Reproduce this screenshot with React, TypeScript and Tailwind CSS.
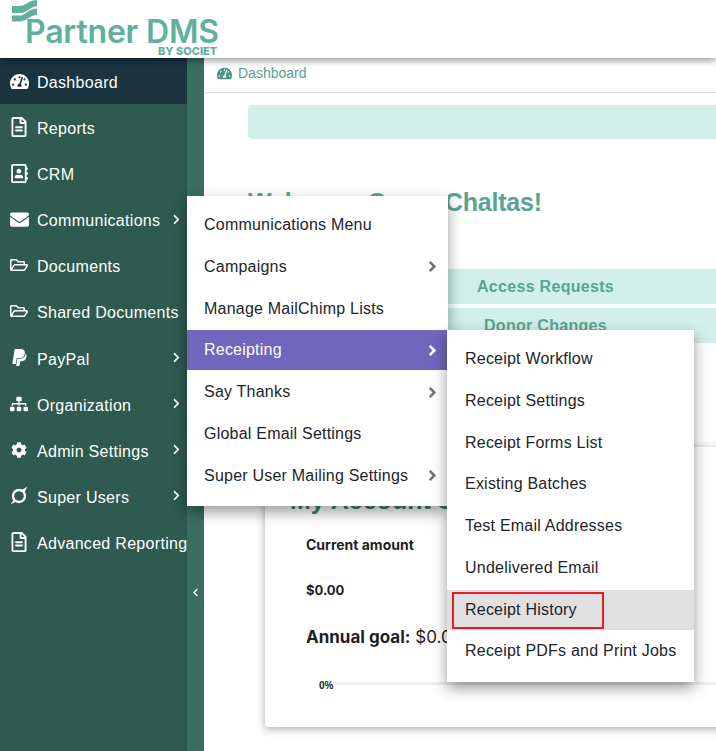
import { FaAngleRight, FaChevronLeft, FaChevronRight, FaCog, FaEnvelope, FaPaypal, FaRegAddressBook, FaRegFileAlt, FaRegFolderOpen, FaSitemap, FaTachometerAlt } from "react-icons/fa";

function SuperIcon({ className }: { className?: string }) {
  return (
    <svg viewBox="0 0 20 20" className={className} fill="currentColor">
      <circle cx="10" cy="10" r="6" fill="none" stroke="currentColor" strokeWidth="2.4" />
      <polygon points="1.5,18.5 8,15 5,13.5" />
      <polygon points="18.5,0.5 12,4.5 15,7" />
    </svg>
  );
}

const navItems = [
  { label: "Dashboard", icon: FaTachometerAlt, size: "h-[19px] w-[19px]", active: true },
  { label: "Reports", icon: FaRegFileAlt, size: "h-[20px] w-[20px]" },
  { label: "CRM", icon: FaRegAddressBook, size: "h-[19px] w-[19px]" },
  { label: "Communications", icon: FaEnvelope, size: "h-[19px] w-[19px]", arrow: true },
  { label: "Documents", icon: FaRegFolderOpen, size: "h-[18px] w-[18px]" },
  { label: "Shared Documents", icon: FaRegFolderOpen, size: "h-[18px] w-[18px]" },
  { label: "PayPal", icon: FaPaypal, size: "h-[19px] w-[19px]", arrow: true },
  { label: "Organization", icon: FaSitemap, size: "h-[18px] w-[18px]", arrow: true },
  { label: "Admin Settings", icon: FaCog, size: "h-[16px] w-[16px]", arrow: true },
  { label: "Super Users", icon: SuperIcon, size: "h-[20px] w-[20px]", arrow: true },
  { label: "Advanced Reporting", icon: FaRegFileAlt, size: "h-[20px] w-[20px]" },
];

const commsMenu = [
  { label: "Communications Menu" },
  { label: "Campaigns", arrow: true },
  { label: "Manage MailChimp Lists" },
  { label: "Receipting", arrow: true, active: true },
  { label: "Say Thanks", arrow: true },
  { label: "Global Email Settings" },
  { label: "Super User Mailing Settings", arrow: true },
];

const receiptMenu = [
  "Receipt Workflow",
  "Receipt Settings",
  "Receipt Forms List",
  "Existing Batches",
  "Test Email Addresses",
  "Undelivered Email",
  "Receipt History",
  "Receipt PDFs and Print Jobs",
];

export default function App() {
  return (
    <div className="relative h-[751px] w-[716px] overflow-hidden bg-white font-['Liberation_Sans',Arial,sans-serif] text-base">
      {/* Header */}
      <header className="relative z-10 h-[58px] bg-white shadow-[0_2px_8px_rgba(0,0,0,0.45)]">
        <div className="relative h-full">
          <svg viewBox="0 0 25 22" className="absolute left-[12px] top-0 h-[22px] w-[25px]" fill="#5fb09c">
            <path d="M0 6 H8 C13 6 15 1 25 0 V6 C18 7 15 13 8 13 H0 Z" />
            <path d="M0 15.5 H8 C14 15.5 15 9 25 8.5 V15 C18 15 15 21 8 21.5 H0 Z" />
          </svg>
          <span className="absolute left-[25px] top-[19px] font-['Inter',sans-serif] text-[32px] leading-[26px] font-semibold tracking-[-0.2px] whitespace-nowrap text-[#5fb09c]">Partner DMS</span>
          <span className="absolute left-[158px] top-[45px] font-['Inter',sans-serif] text-[11px] leading-[12px] font-extrabold whitespace-nowrap text-[#5fb09c]">BY SOCIET</span>
        </div>
      </header>

      <div className="flex h-[693px]">
        {/* Sidebar */}
        <aside className="flex w-[204px] shrink-0">
          <nav className="w-[187px] bg-[#2e5a50] text-white">
            {navItems.map((item) => {
              const Icon = item.icon;
              return (
                <div key={item.label} className={`flex h-[46.08px] items-center whitespace-nowrap ${item.active ? "bg-[#1a3540]" : ""}`}>
                  <span className="flex w-[37px] shrink-0 justify-center pl-[1px]">
                    <Icon className={item.size} />
                  </span>
                  <span className="pt-[4px] tracking-[0.3px]">{item.label}</span>
                  {item.arrow && <FaChevronRight className="mr-[5px] ml-auto h-[11px] w-[11px]" />}
                </div>
              );
            })}
          </nav>
          <div className="flex w-[17px] items-end justify-center bg-[#3a6e60] pb-[154px] text-white">
            <FaChevronLeft className="h-[9px] w-[9px]" />
          </div>
        </aside>

        {/* Main */}
        <main className="min-w-0 flex-1">
          <div className="flex h-[35px] items-center gap-[6px] border-b border-[#d8d8d8] pb-[4px] pl-[13px] text-sm text-[#5a9e90]">
            <FaTachometerAlt className="h-[15px] w-[15px] text-[#4c9383]" />
            <span>Dashboard</span>
          </div>
          <div className="pl-[44px]">
            <div className="mt-[12px] h-[34px] w-[520px] rounded-l-[4px] bg-[#d1f0ea]" />
            <h1 className="mt-[46px] h-[34px] text-[25px] leading-[34px] font-bold tracking-[-0.2px] [word-spacing:-2px] whitespace-nowrap text-[#5aa392]">Welcome, Casey Chaltas!</h1>
            <div className="mt-[50px] flex w-[595px] flex-col gap-[4px] text-center font-bold tracking-[0.3px] text-[#5aa392]">
              <div className="flex h-[35px] items-center justify-center bg-[#d1f0ea]">Access Requests</div>
              <div className="flex h-[35px] items-center justify-center bg-[#d1f0ea]">Donor Changes</div>
            </div>
            <section className="mt-[104px] ml-[17px] h-[280px] w-[500px] rounded-[3px] bg-white pt-[38px] pl-[25px] shadow-[0_2px_8px_rgba(0,0,0,0.35)]">
              <h2 className="text-[25px] leading-[30px] font-bold text-[#3f7f70]">My Account Summary</h2>
              <div className="pl-[16px] font-['Inter',sans-serif] text-[#1f1f1f]">
                <p className="mt-[20px] text-[14px] leading-[20px] font-bold">Current amount</p>
                <p className="mt-[25px] text-[13px] leading-[20px] font-bold">$0.00</p>
                <p className="mt-[25px] text-[17px] leading-[24px]">
                  <span className="font-bold">Annual goal:</span> <span>$0.00</span>
                </p>
              </div>
              <div className="relative mt-[33px] ml-[29px] h-[3px] w-[400px] rounded-sm bg-[#eeeeee]">
                <span className="absolute -top-[3px] left-0 bg-white pr-[1px] text-[10px] leading-[14px] font-bold text-[#222]">0%</span>
              </div>
            </section>
          </div>
        </main>
      </div>

      {/* Communications flyout */}
      <div className="absolute left-[187px] top-[196px] z-20 h-[310px] w-[261px] bg-white pt-[9px] text-[#212529] shadow-[0_6px_14px_rgba(0,0,0,0.4)]">
        {commsMenu.map((item) => (
          <div key={item.label} className={`mb-[1.75px] flex h-[40px] items-center justify-between pr-[7px] pl-[17px] tracking-[0.22px] whitespace-nowrap ${item.active ? "bg-[#7066bc] text-white" : ""}`}>
            <span>{item.label}</span>
            {item.arrow && <FaAngleRight className={`h-[17px] w-[17px] ${item.active ? "text-white" : "text-[#6c757d]"}`} />}
          </div>
        ))}
      </div>

      {/* Receipting flyout */}
      <div className="absolute left-[447px] top-[330px] z-30 h-[352px] w-[247px] bg-white pt-[9px] text-[#212529] shadow-[0_6px_14px_rgba(0,0,0,0.4)]">
        {receiptMenu.map((label) => (
          <div key={label} className={`relative mb-[1.75px] flex h-[40px] items-center pl-[18px] tracking-[0.22px] whitespace-nowrap ${label === "Receipt History" ? "bg-[#e0e0e0]" : ""}`}>
            <span>{label}</span>
            {label === "Receipt History" && (
              <span className="absolute left-[5px] top-[2px] h-[37px] w-[152px] border-2 border-[#ed1c24]" />
            )}
          </div>
        ))}
      </div>
    </div>
  );
}
